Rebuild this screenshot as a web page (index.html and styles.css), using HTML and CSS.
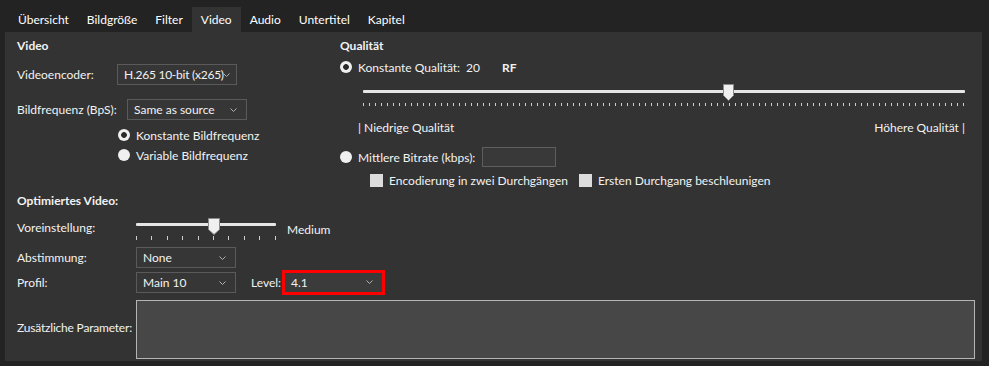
FILE: index.html
```html
<!DOCTYPE html>
<html lang="de">
<head>
    <meta charset="UTF-8">
    <title>Video</title>
    <link rel="stylesheet" href="styles.css">
</head>
<body>
    <div class="tabs">
        <div class="tab">Übersicht</div>
        <div class="tab">Bildgröße</div>
        <div class="tab">Filter</div>
        <div class="tab active">Video</div>
        <div class="tab">Audio</div>
        <div class="tab">Untertitel</div>
        <div class="tab">Kapitel</div>
    </div>

    <div class="panel">
        <div class="top">
            <div class="col-video">
                <div class="heading">Video</div>
                <div class="row row-encoder">
                    <span class="label lbl-encoder">Videoencoder:</span>
                    <div class="select sel-encoder"><span class="value">H.265 10-bit (x265)</span><svg class="chev" width="7" height="4" viewBox="0 0 7 4"><polyline points="0.5,0.5 3.5,3.5 6.5,0.5" fill="none" stroke="#b0b0b0" stroke-width="1"/></svg></div>
                </div>
                <div class="row row-fps">
                    <span class="label lbl-fps">Bildfrequenz (BpS):</span>
                    <div class="select sel-fps"><span class="value">Same as source</span><svg class="chev" width="7" height="4" viewBox="0 0 7 4"><polyline points="0.5,0.5 3.5,3.5 6.5,0.5" fill="none" stroke="#b0b0b0" stroke-width="1"/></svg></div>
                </div>
                <div class="options">
                    <div class="option"><span class="radio on"></span>Konstante Bildfrequenz</div>
                    <div class="option"><span class="radio"></span>Variable Bildfrequenz</div>
                </div>
            </div>

            <div class="col-quality">
                <div class="heading">Qualität</div>
                <div class="option rf-row">
                    <span class="radio on"></span>
                    <span class="rf-label">Konstante Qualität:</span>
                    <span class="rf-value">20</span>
                    <span class="rf-unit">RF</span>
                </div>
                <div class="slider q-slider">
                    <div class="track"></div>
                    <div class="ticks"></div>
                    <svg class="thumb" style="left: 360px" width="11" height="17" viewBox="0 0 11 17"><path d="M0.5 0.5 H10.5 V11.5 L5.5 16.5 L0.5 11.5 Z" fill="#f0f0f0" stroke="#8a8a8a"/></svg>
                </div>
                <div class="q-labels">
                    <span>| Niedrige Qualität</span>
                    <span>Höhere Qualität |</span>
                </div>
                <div class="option bitrate-row">
                    <span class="radio"></span>
                    <span class="bitrate-label">Mittlere Bitrate (kbps):</span>
                    <div class="input"></div>
                </div>
                <div class="checks">
                    <div class="check-item"><span class="checkbox"></span>Encodierung in zwei Durchgängen</div>
                    <div class="check-item"><span class="checkbox"></span>Ersten Durchgang beschleunigen</div>
                </div>
            </div>
        </div>

        <div class="heading heading-opt">Optimiertes Video:</div>
        <div class="opt-grid">
            <span class="label">Voreinstellung:</span>
            <div class="preset-row">
                <div class="slider p-slider">
                    <div class="track"></div>
                    <div class="ticks"></div>
                    <svg class="thumb" style="left: 72px" width="12" height="17" viewBox="0 0 12 17"><path d="M0.5 0.5 H11.5 V11.5 L6 16.5 L0.5 11.5 Z" fill="#f0f0f0" stroke="#8a8a8a"/></svg>
                </div>
                <span class="preset-name">Medium</span>
            </div>

            <span class="label">Abstimmung:</span>
            <div class="line">
                <div class="select sel-small"><span class="value">None</span><svg class="chev" width="7" height="4" viewBox="0 0 7 4"><polyline points="0.5,0.5 3.5,3.5 6.5,0.5" fill="none" stroke="#b0b0b0" stroke-width="1"/></svg></div>
            </div>

            <span class="label">Profil:</span>
            <div class="line">
                <div class="select sel-small"><span class="value">Main 10</span><svg class="chev" width="7" height="4" viewBox="0 0 7 4"><polyline points="0.5,0.5 3.5,3.5 6.5,0.5" fill="none" stroke="#b0b0b0" stroke-width="1"/></svg></div>
                <span class="label lbl-level">Level:</span>
                <div class="highlight">
                    <div class="select sel-level"><span class="value">4.1</span><svg class="chev" width="7" height="4" viewBox="0 0 7 4"><polyline points="0.5,0.5 3.5,3.5 6.5,0.5" fill="none" stroke="#b0b0b0" stroke-width="1"/></svg></div>
                </div>
            </div>

            <span class="label lbl-extra">Zusätzliche Parameter:</span>
            <div class="textarea"></div>
        </div>
    </div>
</body>
</html>
```

FILE: styles.css
```css
body {
    margin: 0;
    background: #232323;
    color: #f2f2f2;
    font-family: 'Lato', 'Noto Sans', sans-serif;
    font-size: 12px;
    overflow: hidden;
}

.tabs {
    display: flex;
    padding: 7px 0 0 9px;
    height: 25px;
}

.tab {
    padding: 0 9px;
    line-height: 25px;
    color: #ffffff;
}

.tab.active {
    background: #333333;
}

.panel {
    margin: 0 7px 0 5px;
    height: 329px;
    background: #333333;
    padding: 6px 0 0 12px;
    box-sizing: border-box;
}

.heading {
    font-weight: bold;
    line-height: 16px;
    height: 16px;
}

.label {
    white-space: nowrap;
}

.top {
    display: flex;
}

.col-video {
    width: 323px;
}

.row {
    display: flex;
    align-items: center;
}

.row-encoder {
    margin-top: 10px;
}

.row-fps {
    margin-top: 14px;
}

.lbl-encoder {
    width: 100px;
}

.lbl-fps {
    width: 110px;
}

.select {
    position: relative;
    height: 21px;
    box-sizing: border-box;
    border: 1px solid #5a5a5a;
    background: #363636;
    display: flex;
    align-items: center;
    padding-left: 6px;
}

.select .value {
    white-space: nowrap;
}

.select .chev {
    position: absolute;
    right: 9px;
    top: 8px;
}

.sel-encoder {
    width: 120px;
}

.sel-encoder .value {
    letter-spacing: -0.25px;
}

.sel-encoder .chev {
    right: 6px;
}

.sel-fps {
    width: 120px;
}

.options {
    margin: 5px 0 0 101px;
}

.option {
    display: flex;
    align-items: center;
    height: 20px;
}

.radio {
    width: 12px;
    height: 12px;
    border-radius: 50%;
    background: #f0f0f0;
    margin-right: 6px;
    flex: none;
}

.radio.on {
    background: radial-gradient(circle, #2a2a2a 2.5px, #f0f0f0 3.2px);
}

.col-quality {
    flex: 1;
    padding-right: 10px;
}

.rf-row {
    margin-top: 4px;
    height: 18px;
}

.rf-label {
    width: 108px;
}

.rf-value {
    width: 36px;
}

.rf-unit {
    font-weight: bold;
}

.slider {
    position: relative;
}

.track {
    background: #e6e6e6;
    border-radius: 1px;
}

.ticks {
    height: 4px;
    background: repeating-linear-gradient(90deg, #cfcfcf 0 1px, transparent 1px 6px);
}

.thumb {
    position: absolute;
    top: 0;
}

.q-slider {
    margin: 8px 7px 0 23px;
    height: 23px;
    padding-top: 6px;
    box-sizing: border-box;
}

.q-slider .track {
    height: 3px;
}

.q-slider .ticks {
    margin-top: 10px;
    height: 3px;
}

.q-labels {
    display: flex;
    justify-content: space-between;
    margin: 13px 7px 0 18px;
    line-height: 16px;
}

.bitrate-row {
    margin-top: 11px;
}

.bitrate-label {
    width: 124px;
}

.input {
    width: 74px;
    height: 20px;
    box-sizing: border-box;
    border: 1px solid #5e5e5e;
    background: #393939;
}

.checks {
    display: flex;
    margin: 6px 0 0 30px;
}

.check-item {
    display: flex;
    align-items: center;
    height: 14px;
}

.check-item:first-child {
    width: 209px;
}

.checkbox {
    width: 13px;
    height: 13px;
    background: #dcdcdc;
    margin-right: 6px;
}

.heading-opt {
    margin-top: 6px;
}

.opt-grid {
    display: grid;
    grid-template-columns: 119px 1fr;
    align-items: center;
    padding-right: 7px;
}

.preset-row {
    display: flex;
    align-items: flex-start;
    height: 27px;
    margin-top: 9px;
}

.p-slider {
    width: 140px;
    height: 24px;
    padding-top: 5px;
    box-sizing: border-box;
}

.p-slider .track {
    height: 3px;
}

.p-slider .ticks {
    margin-top: 10px;
    height: 4px;
    background: repeating-linear-gradient(90deg, #cfcfcf 0 1px, transparent 1px 15.4px);
}

.preset-name {
    margin-left: 11px;
    line-height: 16px;
    margin-top: 4px;
}

.line {
    display: flex;
    align-items: center;
    height: 25px;
}

.sel-small {
    width: 100px;
}

.lbl-level {
    width: 31px;
    margin-left: 15px;
}

.highlight {
    border: 3px solid #ff0000;
}

.sel-level {
    width: 97px;
    height: 19px;
    border: none;
    background: #3b3b3b;
}

.sel-level .chev {
    top: 7px;
}

.lbl-extra {
    letter-spacing: -0.2px;
}

.textarea {
    height: 59px;
    margin-top: 5px;
    box-sizing: border-box;
    border: 1px solid #b4b4b4;
    background: #474747;
}
```
